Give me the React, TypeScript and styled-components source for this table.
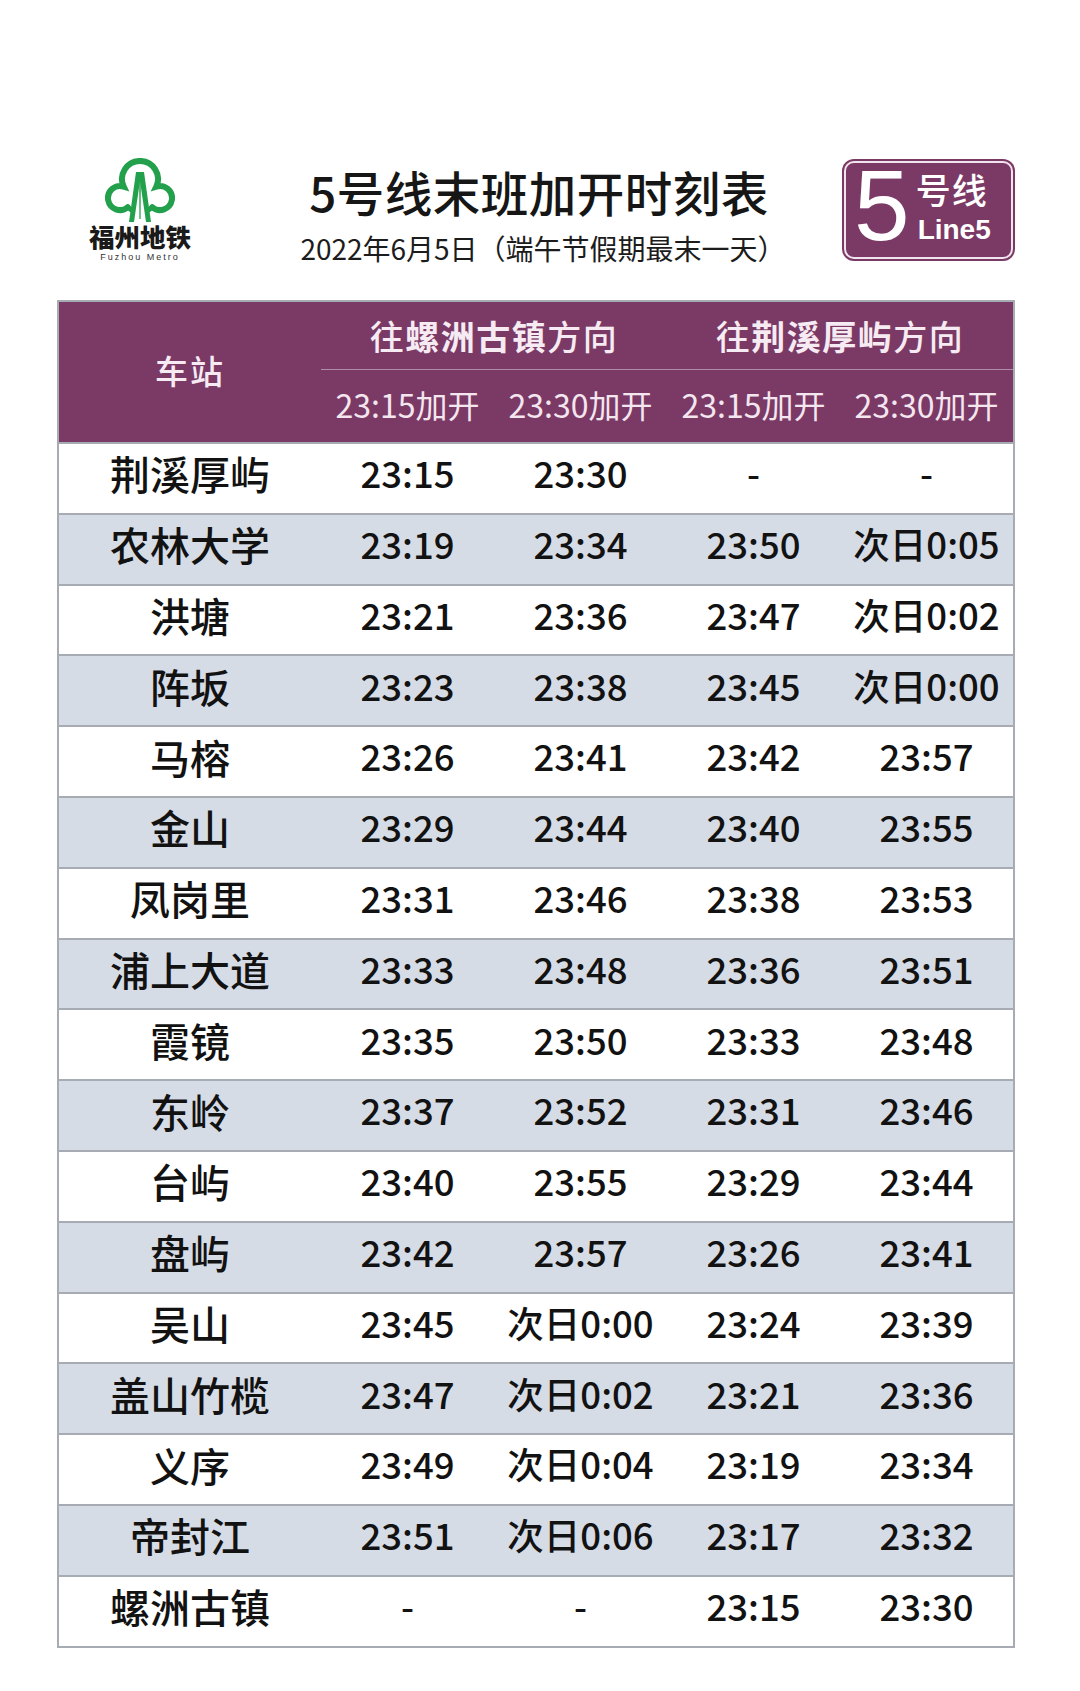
import React from "react";
import styled, { createGlobalStyle } from "styled-components";

const GlobalStyle = createGlobalStyle`
  html, body { margin: 0; padding: 0; background: #ffffff; }
  body {
    font-family: "Noto Sans CJK SC", "Noto Sans", sans-serif;
    color: #151515;
    -webkit-font-smoothing: antialiased;
  }
  * { box-sizing: border-box; }
`;

const PURPLE = "#7b3a66";
const GRID = "#a6abb4";

const Page = styled.div`
  width: 1080px;
  min-height: 1691px;
  padding: 155px 0 0 57px;
`;

const Sheet = styled.div`
  width: 958px;
`;

const Header = styled.header`
  height: 145px;
  display: grid;
  grid-template-columns: 1fr auto 1fr;
  align-items: start;
`;

const LogoBlock = styled.div`
  margin-top: 3px;
  margin-left: 31px;
  width: 104px;
  display: flex;
  flex-direction: column;
  align-items: center;
`;

const LogoName = styled.div`
  margin-top: 1px;
  font-size: 25px;
  font-weight: 900;
  line-height: 26px;
  color: #1a1a1a;
  transform: scaleX(1.02);
`;

const LogoEn = styled.div`
  margin-top: 3px;
  font-family: "Liberation Sans", Arial, sans-serif;
  font-size: 9px;
  line-height: 10px;
  letter-spacing: 2px;
  color: #333;
`;

const TitleBlock = styled.div`
  margin-top: 10px;
  margin-left: 14px;
  display: flex;
  flex-direction: column;
  align-items: center;
`;

const Title = styled.h1`
  margin: 0 8px 0 0;
  font-size: 47.5px;
  line-height: 54px;
  font-weight: 500;
  color: #161616;
  letter-spacing: 0.5px;
`;

const Subtitle = styled.div`
  margin-top: 13px;
  font-size: 28px;
  line-height: 32px;
  font-weight: 400;
  color: #1c1c1c;
`;

const Badge = styled.div`
  justify-self: end;
  margin-top: 4px;
  width: 173px;
  height: 102px;
  padding: 2px;
  border-radius: 12px;
  background: ${PURPLE};
`;

const BadgeInner = styled.div`
  height: 100%;
  border: 2px solid #f2e4ee;
  border-radius: 10px;
  display: flex;
  align-items: flex-start;
  padding-left: 8px;
  color: #ffffff;
`;

const BadgeNumber = styled.div`
  margin-top: 2px;
  font-family: "Liberation Sans", Arial, sans-serif;
  font-size: 100px;
  line-height: 80px;
  font-weight: 400;
`;

const BadgeText = styled.div`
  margin-top: 7px;
  margin-left: 6px;
  display: flex;
  flex-direction: column;
`;

const BadgeCn = styled.div`
  font-size: 35px;
  line-height: 38px;
  font-weight: 500;
  letter-spacing: 1px;
`;

const BadgeEn = styled.div`
  margin-top: 8px;
  margin-left: 2px;
  font-family: "Liberation Sans", Arial, sans-serif;
  font-size: 28px;
  line-height: 28px;
  font-weight: 700;
`;

const Table = styled.div`
  border: 2px solid ${GRID};
  width: 958px;
`;

const COLS = "262px repeat(4, 1fr)";

const Head = styled.div`
  display: grid;
  grid-template-columns: ${COLS};
  grid-template-rows: 68px 72px;
  background: ${PURPLE};
  color: #f7ebf3;
`;

const HeadCell = styled.div<{ $rows?: string; $cols?: string; $line?: boolean }>`
  grid-row: ${(p) => p.$rows || "auto"};
  grid-column: ${(p) => p.$cols || "auto"};
  display: flex;
  align-items: center;
  justify-content: center;
  border-bottom: ${(p) => (p.$line ? "1px solid rgba(255,255,255,0.42)" : "none")};
`;

const StationHead = styled.span`
  font-size: 33px;
  font-weight: 500;
  letter-spacing: 2px;
  padding-bottom: 4px;
`;

const GroupTitle = styled.span`
  font-size: 34px;
  font-weight: 500;
  letter-spacing: 1.5px;
`;

const Strong = styled.b`
  font-weight: 700;
`;

const SubTitle = styled.span`
  font-size: 32px;
  font-weight: 400;
  color: #f4e6ef;
  padding-bottom: 4px;
`;

const Row = styled.div<{ $alt: boolean }>`
  display: grid;
  grid-template-columns: ${COLS};
  height: 70.8px;
  border-top: 2px solid ${GRID};
  background: ${(p) => (p.$alt ? "#d6dce6" : "#ffffff")};
`;

const Cell = styled.div<{ $name?: boolean }>`
  display: flex;
  align-items: center;
  justify-content: center;
  padding-bottom: 10px;
  font-size: ${(p) => (p.$name ? "40px" : "36.5px")};
  font-weight: 500;
  line-height: 1;
  color: #121212;
`;

const rows: string[][] = [
  ["荆溪厚屿", "23:15", "23:30", "-", "-"],
  ["农林大学", "23:19", "23:34", "23:50", "次日0:05"],
  ["洪塘", "23:21", "23:36", "23:47", "次日0:02"],
  ["阵坂", "23:23", "23:38", "23:45", "次日0:00"],
  ["马榕", "23:26", "23:41", "23:42", "23:57"],
  ["金山", "23:29", "23:44", "23:40", "23:55"],
  ["凤岗里", "23:31", "23:46", "23:38", "23:53"],
  ["浦上大道", "23:33", "23:48", "23:36", "23:51"],
  ["霞镜", "23:35", "23:50", "23:33", "23:48"],
  ["东岭", "23:37", "23:52", "23:31", "23:46"],
  ["台屿", "23:40", "23:55", "23:29", "23:44"],
  ["盘屿", "23:42", "23:57", "23:26", "23:41"],
  ["吴山", "23:45", "次日0:00", "23:24", "23:39"],
  ["盖山竹榄", "23:47", "次日0:02", "23:21", "23:36"],
  ["义序", "23:49", "次日0:04", "23:19", "23:34"],
  ["帝封江", "23:51", "次日0:06", "23:17", "23:32"],
  ["螺洲古镇", "-", "-", "23:15", "23:30"],
];

const GREEN = "#22a04b";

const TreeLogo = () => (
  <svg width="70" height="64" viewBox="0 0 70 64" aria-hidden="true">
    <path
      d="M 22.7 49.2 A 12 12 0 1 1 18.7 28.6 A 18 18 0 1 1 51.3 28.6 A 12 12 0 1 1 47.3 49.2"
      fill="none"
      stroke={GREEN}
      strokeWidth="6"
      strokeLinecap="round"
    />
    <path d="M 22.7 49.2 L 26.5 52" stroke={GREEN} strokeWidth="5" strokeLinecap="round" />
    <path d="M 47.3 49.2 L 43.5 52" stroke={GREEN} strokeWidth="5" strokeLinecap="round" />
    <path d="M 31 14 L 39 14 L 46 64 L 24 64 Z" fill={GREEN} />
    <path d="M 35 23 L 41 64 L 29 64 Z" fill="#ffffff" />
    <path d="M 34.2 18 L 35.8 18 L 35.6 61 L 34.4 61 Z" fill={GREEN} />
  </svg>
);

export default function App() {
  return (
    <>
      <GlobalStyle />
      <Page>
        <Sheet>
          <Header>
            <LogoBlock>
              <TreeLogo />
              <LogoName>福州地铁</LogoName>
              <LogoEn>Fuzhou Metro</LogoEn>
            </LogoBlock>
            <TitleBlock>
              <Title>5号线末班加开时刻表</Title>
              <Subtitle>2022年6月5日（端午节假期最末一天）</Subtitle>
            </TitleBlock>
            <Badge>
              <BadgeInner>
                <BadgeNumber>5</BadgeNumber>
                <BadgeText>
                  <BadgeCn>号线</BadgeCn>
                  <BadgeEn>Line5</BadgeEn>
                </BadgeText>
              </BadgeInner>
            </Badge>
          </Header>
          <Table>
            <Head>
              <HeadCell $rows="1 / 3" $cols="1">
                <StationHead>车站</StationHead>
              </HeadCell>
              <HeadCell $cols="2 / 4" $line>
                <GroupTitle>
                  往<Strong>螺洲古镇</Strong>方向
                </GroupTitle>
              </HeadCell>
              <HeadCell $cols="4 / 6" $line>
                <GroupTitle>
                  往<Strong>荆溪厚屿</Strong>方向
                </GroupTitle>
              </HeadCell>
              <HeadCell><SubTitle>23:15加开</SubTitle></HeadCell>
              <HeadCell><SubTitle>23:30加开</SubTitle></HeadCell>
              <HeadCell><SubTitle>23:15加开</SubTitle></HeadCell>
              <HeadCell><SubTitle>23:30加开</SubTitle></HeadCell>
            </Head>
            {rows.map((r, i) => (
              <Row key={r[0]} $alt={i % 2 === 1}>
                {r.map((c, j) => (
                  <Cell key={j} $name={j === 0}>
                    {c}
                  </Cell>
                ))}
              </Row>
            ))}
          </Table>
        </Sheet>
      </Page>
    </>
  );
}
